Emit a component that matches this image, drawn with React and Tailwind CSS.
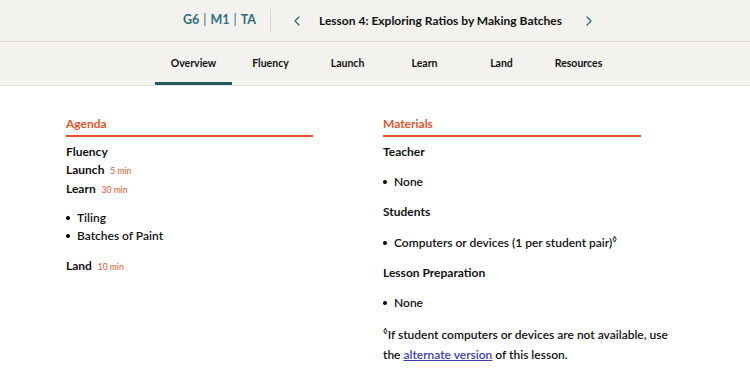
import { ChevronLeft, ChevronRight } from "lucide-react";

const tabs = ["Overview", "Fluency", "Launch", "Learn", "Land", "Resources"];

function Bullet({ children }) {
  return (
    <li className="flex items-center gap-[7px]">
      <span className="w-[4px] h-[4px] rounded-full bg-black"></span>
      <span>{children}</span>
    </li>
  );
}

function Mark() {
  return <span className="relative -top-[5px] text-[8px] leading-none font-bold">◊</span>;
}

function App() {
  return (
    <div className="w-[750px] h-[388px] bg-white text-[#111] font-['Lato',sans-serif] overflow-hidden">
      <header className="bg-[#f3f2ee]">
        <div className="h-[42px] flex items-center border-b border-[#dddbd4]">
          <div className="ml-[183px] flex items-center gap-[4px] text-[12.5px] font-bold text-[#2f6f78]">
            <span>G6</span>
            <span className="font-normal">|</span>
            <span>M1</span>
            <span className="font-normal">|</span>
            <span>TA</span>
          </div>
          <div className="ml-[14px] w-px h-[24px] bg-[#d6d4cc]"></div>
          <ChevronLeft className="ml-[18px] text-[#2f6f78]" size={16} strokeWidth={2} />
          <span className="ml-[14px] text-[12px] font-bold">Lesson 4: Exploring Ratios by Making Batches</span>
          <ChevronRight className="ml-[19px] text-[#2f6f78]" size={16} strokeWidth={2} />
        </div>
        <nav className="h-[44px] flex items-stretch pl-[155px] border-b border-[#e4e2db]">
          {tabs.map((t, i) => (
            <div
              key={t}
              className={`w-[77px] flex items-center justify-center text-[10.5px] font-bold ${
                i === 0 ? "border-b-[3px] border-[#1f5c5d] pt-[3px]" : ""
              }`}
            >
              {t}
            </div>
          ))}
        </nav>
      </header>
      <main className="flex pt-[29px] pl-[66px]">
        <section className="w-[247px]">
          <h2 className="text-[12px] font-bold text-[#e5532b] pb-[2px] border-b-2 border-[#e5532b]">Agenda</h2>
          <div className="mt-[6px] text-[12px] font-bold leading-[18px]">
            <div>Fluency</div>
            <div>
              Launch <span className="ml-[3px] text-[8.5px] font-normal text-[#e5532b]">5 min</span>
            </div>
            <div>
              Learn <span className="ml-[3px] text-[8.5px] font-normal text-[#e5532b]">30 min</span>
            </div>
          </div>
          <ul className="mt-[10px] text-[12px] font-semibold leading-[18px]">
            <Bullet>Tiling</Bullet>
            <Bullet>Batches of Paint</Bullet>
          </ul>
          <div className="mt-[12px] text-[12px] font-bold leading-[18px]">
            Land <span className="ml-[3px] text-[8.5px] font-normal text-[#e5532b]">10 min</span>
          </div>
        </section>
        <section className="ml-[70px] w-[258px] text-[12px]">
          <h2 className="font-bold text-[#e5532b] pb-[2px] border-b-2 border-[#e5532b]">Materials</h2>
          <div className="mt-[6px] font-bold leading-[18px]">Teacher</div>
          <ul className="mt-[12px] font-semibold leading-[18px]">
            <Bullet>None</Bullet>
          </ul>
          <div className="mt-[12px] font-bold leading-[18px]">Students</div>
          <ul className="mt-[13px] font-semibold leading-[18px]">
            <Bullet>
              Computers or devices (1 per student pair)<Mark />
            </Bullet>
          </ul>
          <div className="mt-[12px] font-bold leading-[18px]">Lesson Preparation</div>
          <ul className="mt-[12px] font-semibold leading-[18px]">
            <Bullet>None</Bullet>
          </ul>
          <p className="mt-[13px] font-semibold leading-[20px] w-[300px]">
            <Mark />If student computers or devices are not available, use the{" "}
            <a href="#" className="text-[#3a3fb0] underline">alternate version</a> of this lesson.
          </p>
        </section>
      </main>
    </div>
  );
}

export default App;
